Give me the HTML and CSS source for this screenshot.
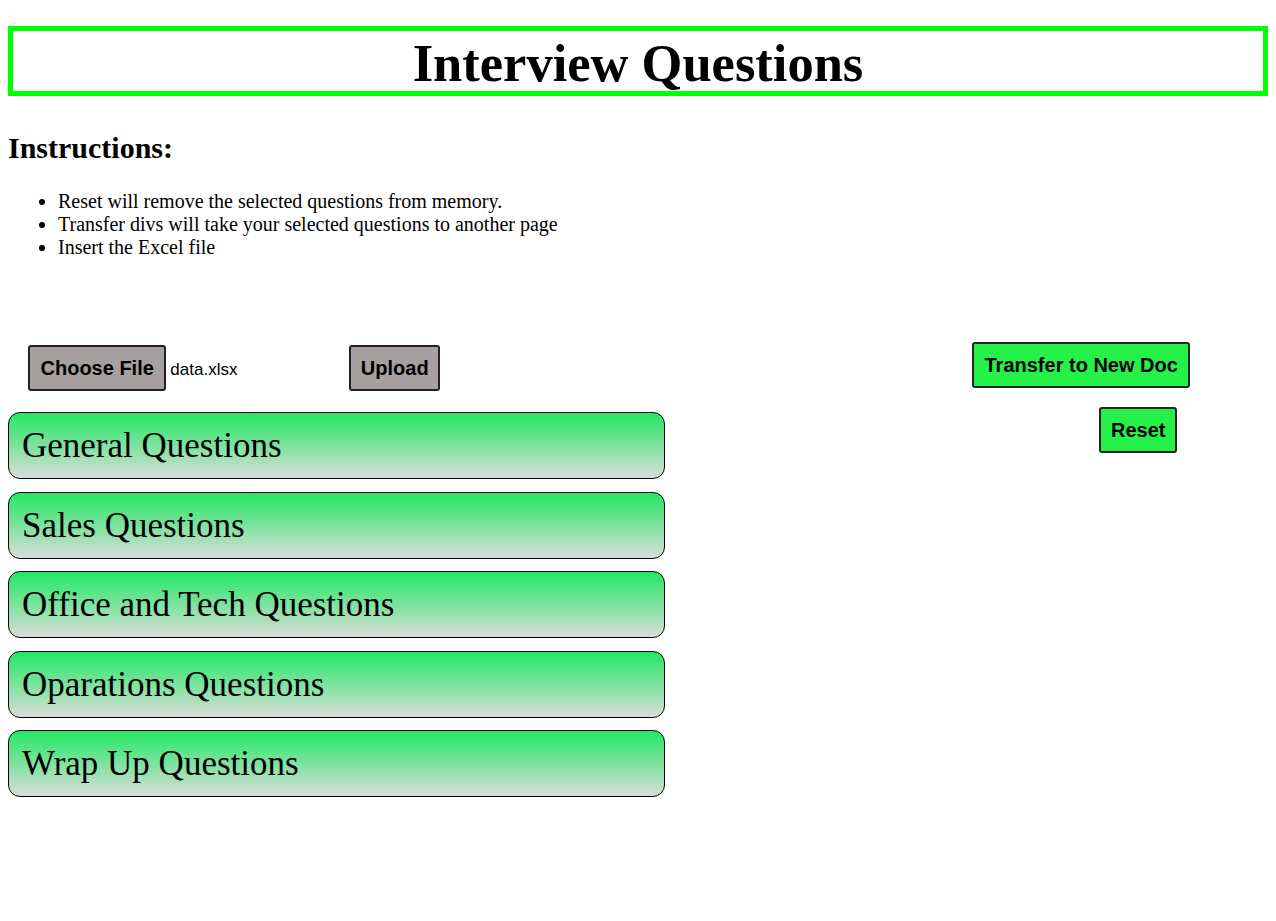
FILE: index.html
```html
<!DOCTYPE html>
<html lang="en">
<head>
<meta charset="utf-8">
<title>Interview Questions</title>
<link rel="stylesheet" href="styles.css">
</head>
<body>
<h1 class="title">Interview Questions</h1>
<h2 class="instr-title">Instructions:</h2>
<ul class="instr-list">
  <li>Reset will remove the selected questions from memory.</li>
  <li>Transfer divs will take your selected questions to another page</li>
  <li>Insert the Excel file</li>
</ul>
<div class="workspace">
  <div class="left-col">
    <div class="upload-row">
      <span class="btn btn-gray">Choose File</span>
      <span class="file-name">data.xlsx</span>
      <span class="btn btn-gray btn-upload">Upload</span>
    </div>
    <div class="category">General Questions</div>
    <div class="category">Sales Questions</div>
    <div class="category">Office and Tech Questions</div>
    <div class="category">Oparations Questions</div>
    <div class="category">Wrap Up Questions</div>
  </div>
  <div class="right-col">
    <span class="btn btn-green btn-transfer">Transfer to New Doc</span>
    <span class="btn btn-green btn-reset">Reset</span>
  </div>
</div>
</body>
</html>
```
FILE: styles.css
```css
body {
  margin: 8px;
  font-family: "Liberation Serif", "Times New Roman", serif;
  color: #000;
  background: #fff;
}
.title {
  margin: 18px 0 0;
  border: 5px solid #00ff00;
  font-size: 52.5px;
  font-weight: bold;
  text-align: center;
  line-height: 56px;
  padding-top: 4px;
}
.instr-title {
  margin: 35px 0 0;
  font-size: 30px;
  font-weight: bold;
  line-height: 34px;
}
.instr-list {
  margin: 25px 0 0;
  padding-left: 50px;
  font-size: 20px;
  line-height: 23px;
}
.workspace {
  display: grid;
  grid-template-columns: 657px 1fr;
  margin-top: 83px;
}
.left-col {
  display: flex;
  flex-direction: column;
}
.upload-row {
  display: flex;
  align-items: center;
  padding-left: 20px;
  margin-top: 3px;
  margin-bottom: 21px;
}
.btn {
  display: inline-block;
  font-family: "Liberation Sans", Arial, sans-serif;
  font-size: 20px;
  font-weight: bold;
  line-height: 23px;
  border: 2px solid #222;
  border-radius: 3px;
  padding: 9.5px 10.5px;
  box-sizing: border-box;
}
.btn-gray {
  background: #a6a0a0;
}
.btn-green {
  background: #24f248;
}
.file-name {
  font-family: "Liberation Sans", Arial, sans-serif;
  font-size: 17px;
  margin-left: 4px;
  margin-top: 3px;
  width: 179px;
}
.btn-upload {
  padding: 9.5px 9.5px;
}
.category {
  border: 1px solid #000;
  border-radius: 12px;
  background: linear-gradient(to bottom, #22e864, #d8ddd9);
  font-size: 35px;
  line-height: 40px;
  padding: 13px 13px 12px;
  margin-bottom: 12.5px;
}
.right-col {
  display: flex;
  flex-direction: column;
  align-items: flex-start;
}
.btn-transfer {
  margin-left: 307px;
}
.btn-reset {
  margin-left: 434px;
  margin-top: 19px;
  padding: 9.5px 10px;
}
```
